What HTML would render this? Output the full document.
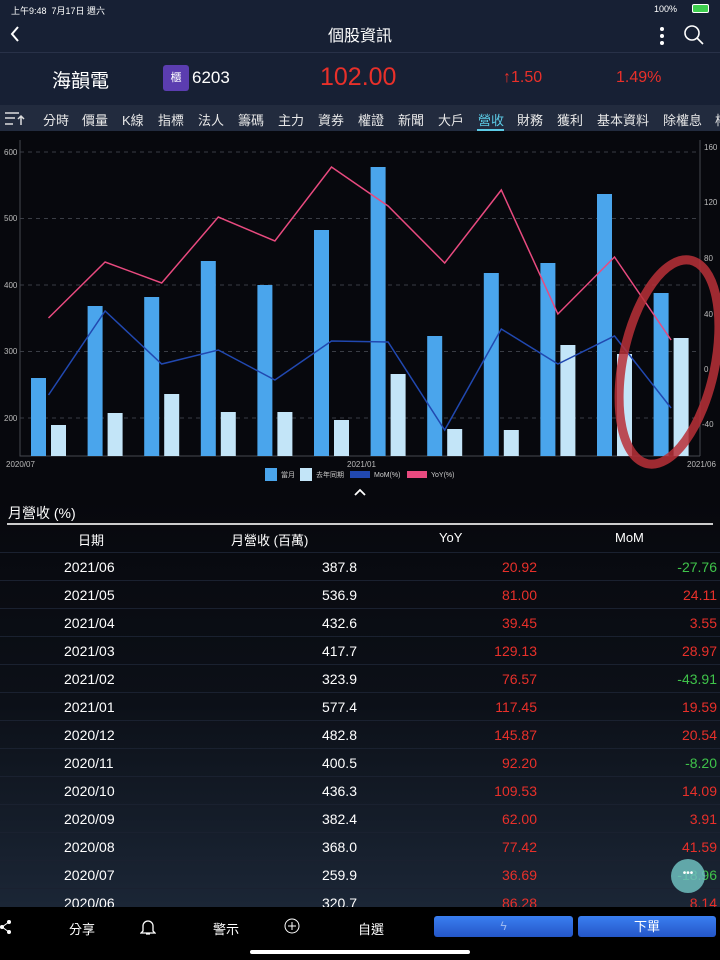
<!DOCTYPE html>
<html><head><meta charset="utf-8"><style>
*{margin:0;padding:0;box-sizing:border-box}
body{width:720px;height:960px;overflow:hidden;background:#07080d;font-family:"Liberation Sans","Noto Sans CJK TC",sans-serif;color:#fff;position:relative}
.abs{position:absolute}
#top{left:0;top:0;width:720px;height:105px;background:#172034}
#tabs{left:0;top:105px;width:720px;height:26px;background:#222b3e;font-size:13px;color:#e8e8e8}
#tabs span{position:absolute;top:5px;white-space:nowrap}
#tbl{left:0;top:500px;width:720px;height:407px;background:linear-gradient(#07080d 0%,#0c1018 50%,#1b2636 100%)}
.row{position:absolute;left:0;width:720px;height:28px;border-top:1px solid #1a2130;font-size:14px}
.row span{position:absolute;top:6px}
.d{left:64px}.v{right:363px}.y{right:183px;color:#e8302a}.m{right:3px;color:#e8302a}.g{color:#3fc34a!important}
#bot{left:0;top:907px;width:720px;height:53px;background:#000;font-size:13px}
</style></head><body>
<div id="top" class="abs">
 <div class="abs" style="left:11px;top:4px;font-size:9px">上午9:48&nbsp;&nbsp;7月17日 週六</div>
 <div class="abs" style="left:654px;top:4px;font-size:9px">100%</div>
 <div class="abs" style="left:692px;top:4px;width:17px;height:9px;border:1px solid #fff;border-radius:2px;background:#3fcf4f"></div>
 <svg class="abs" style="left:8px;top:24px" width="14" height="20"><path d="M10 3 L4 10 L10 17" stroke="#fff" stroke-width="2" fill="none"/></svg>
 <div class="abs" style="left:0;width:720px;top:22px;text-align:center;font-size:16px">個股資訊</div>
 <div class="abs" style="left:660px;top:27px;width:4px;height:4px;border-radius:2px;background:#fff;box-shadow:0 7px #fff,0 14px #fff"></div>
 <svg class="abs" style="left:683px;top:24px" width="22" height="22"><circle cx="9" cy="9" r="7" stroke="#fff" stroke-width="1.6" fill="none"/><path d="M14 14 L20 20" stroke="#fff" stroke-width="1.6"/></svg>
 <div class="abs" style="left:0;top:52px;width:720px;border-top:1px solid #283148"></div>
 <div class="abs" style="left:52px;top:66px;font-size:19px">海韻電</div>
 <div class="abs" style="left:163px;top:65px;width:26px;height:26px;background:#5b3db0;border-radius:3px;font-size:11px;text-align:center;line-height:26px">櫃</div>
 <div class="abs" style="left:192px;top:68px;font-size:17px">6203</div>
 <div class="abs" style="left:320px;top:63px;font-size:25px;color:#e8302a">102.00</div>
 <div class="abs" style="left:503px;top:69px;font-size:16px;color:#e8302a">↑1.50</div>
 <div class="abs" style="left:616px;top:69px;font-size:16px;color:#e8302a">1.49%</div>
</div>
<div id="tabs" class="abs">
 <svg class="abs" style="left:5px;top:7px" width="20" height="14"><path d="M0 1H14M0 6H10M0 12H8M16 13V4M13 7L16 4L19 7" stroke="#ddd" stroke-width="1.5" fill="none"/></svg>
 <span style="left:43px">分時</span><span style="left:82px">價量</span><span style="left:122px">K線</span><span style="left:158px">指標</span><span style="left:198px">法人</span><span style="left:238px">籌碼</span><span style="left:278px">主力</span><span style="left:318px">資券</span><span style="left:358px">權證</span><span style="left:398px">新聞</span><span style="left:438px">大戶</span><span style="left:478px;color:#5ccbe6">營收</span><span style="left:517px">財務</span><span style="left:557px">獲利</span><span style="left:597px">基本資料</span><span style="left:663px">除權息</span><span style="left:715px">權</span>
 <div class="abs" style="left:477px;top:24px;width:27px;height:2px;background:#5ccbe6"></div>
</div>
<svg class="abs" style="left:0;top:131px" width="720" height="369" viewBox="0 131 720 369">
 <g stroke="#3a3d45" stroke-dasharray="4,4" stroke-width="1">
  <path d="M20 152H700M20 218.5H700M20 285H700M20 351.5H700M20 418H700"/>
 </g>
 <path d="M20 140V456H700M700 140V456" stroke="#444850" fill="none"/>
 <g font-size="8" fill="#bbb">
  <text x="4" y="155">600</text><text x="4" y="221">500</text><text x="4" y="288">400</text><text x="4" y="354">300</text><text x="4" y="421">200</text>
  <text x="704" y="150">160</text><text x="704" y="205">120</text><text x="704" y="261">80</text><text x="704" y="317">40</text><text x="704" y="372">0</text><text x="702" y="427">-40</text>
  <text x="6" y="467">2020/07</text><text x="347" y="467">2021/01</text><text x="687" y="467">2021/06</text>
 </g>
 <g fill="#4aa5ec">
  <rect x="31" y="378" width="15" height="78"/><rect x="87.6" y="306" width="15" height="150"/><rect x="144.2" y="297" width="15" height="159"/><rect x="200.8" y="261" width="15" height="195"/><rect x="257.4" y="285" width="15" height="171"/><rect x="314" y="230" width="15" height="226"/><rect x="370.6" y="167" width="15" height="289"/><rect x="427.2" y="336" width="15" height="120"/><rect x="483.8" y="273" width="15" height="183"/><rect x="540.4" y="263" width="15" height="193"/><rect x="597" y="194" width="15" height="262"/><rect x="653.6" y="293" width="15" height="163"/>
 </g>
 <g fill="#c3e5f8">
  <rect x="51" y="425" width="15" height="31"/><rect x="107.6" y="413" width="15" height="43"/><rect x="164.2" y="394" width="15" height="62"/><rect x="220.8" y="412" width="15" height="44"/><rect x="277.4" y="412" width="15" height="44"/><rect x="334" y="420" width="15" height="36"/><rect x="390.6" y="374" width="15" height="82"/><rect x="447.2" y="429" width="15" height="27"/><rect x="503.8" y="430" width="15" height="26"/><rect x="560.4" y="345" width="15" height="111"/><rect x="617" y="354" width="15" height="102"/><rect x="673.6" y="338" width="15" height="118"/>
 </g>
 <polyline fill="none" stroke="#e84a7f" stroke-width="1.5" points="48.5,318 105.1,262 161.7,283 218.3,217 274.9,241 331.5,167 388.1,206 444.7,263 501.3,190 557.9,314 614.5,257 671.1,340"/>
 <polyline fill="none" stroke="#2148b0" stroke-width="1.5" points="48.5,395 105.1,311 161.7,364 218.3,350 274.9,380 331.5,341 388.1,342 444.7,430 501.3,329 557.9,364 614.5,336 671.1,408"/>
 <ellipse cx="669" cy="362" rx="46" ry="104" transform="rotate(12 669 362)" fill="none" stroke="#b83038" stroke-width="9" opacity="0.85"/>
 <g font-size="7" fill="#ccc">
  <rect x="265" y="468" width="12" height="13" fill="#4aa5ec"/><text x="281" y="477">當月</text>
  <rect x="300" y="468" width="12" height="13" fill="#c3e5f8"/><text x="316" y="477">去年同期</text>
  <rect x="350" y="471" width="20" height="7" fill="#2148b0"/><text x="374" y="477">MoM(%)</text>
  <rect x="407" y="471" width="20" height="7" fill="#e84a7f"/><text x="431" y="477">YoY(%)</text>
 </g>
 <path d="M355 495L360 490L365 495" stroke="#fff" stroke-width="1.8" fill="none"/>
</svg>
<div id="tbl" class="abs">
 <div class="abs" style="left:8px;top:3px;font-size:14px">月營收 (%)</div>
 <div class="abs" style="left:7px;top:23px;width:706px;height:2px;background:#ccc"></div>
 <div class="abs" style="top:30px;left:0;width:720px;font-size:13px">
  <span class="abs" style="left:78px">日期</span><span class="abs" style="left:231px">月營收 (百萬)</span><span class="abs" style="left:439px">YoY</span><span class="abs" style="left:615px">MoM</span>
 </div>
 <div class="row" style="top:52px"><span class="d">2021/06</span><span class="v">387.8</span><span class="y">20.92</span><span class="m g">-27.76</span></div>
 <div class="row" style="top:80px"><span class="d">2021/05</span><span class="v">536.9</span><span class="y">81.00</span><span class="m">24.11</span></div>
 <div class="row" style="top:108px"><span class="d">2021/04</span><span class="v">432.6</span><span class="y">39.45</span><span class="m">3.55</span></div>
 <div class="row" style="top:136px"><span class="d">2021/03</span><span class="v">417.7</span><span class="y">129.13</span><span class="m">28.97</span></div>
 <div class="row" style="top:164px"><span class="d">2021/02</span><span class="v">323.9</span><span class="y">76.57</span><span class="m g">-43.91</span></div>
 <div class="row" style="top:192px"><span class="d">2021/01</span><span class="v">577.4</span><span class="y">117.45</span><span class="m">19.59</span></div>
 <div class="row" style="top:220px"><span class="d">2020/12</span><span class="v">482.8</span><span class="y">145.87</span><span class="m">20.54</span></div>
 <div class="row" style="top:248px"><span class="d">2020/11</span><span class="v">400.5</span><span class="y">92.20</span><span class="m g">-8.20</span></div>
 <div class="row" style="top:276px"><span class="d">2020/10</span><span class="v">436.3</span><span class="y">109.53</span><span class="m">14.09</span></div>
 <div class="row" style="top:304px"><span class="d">2020/09</span><span class="v">382.4</span><span class="y">62.00</span><span class="m">3.91</span></div>
 <div class="row" style="top:332px"><span class="d">2020/08</span><span class="v">368.0</span><span class="y">77.42</span><span class="m">41.59</span></div>
 <div class="row" style="top:360px"><span class="d">2020/07</span><span class="v">259.9</span><span class="y">36.69</span><span class="m g">-18.96</span></div>
 <div class="row" style="top:388px"><span class="d">2020/06</span><span class="v">320.7</span><span class="y">86.28</span><span class="m">8.14</span></div>
 <div class="abs" style="left:671px;top:359px;width:34px;height:34px;border-radius:50%;background:rgba(110,190,190,0.85);font-size:10px;text-align:center;line-height:30px">•••</div>
</div>
<div id="bot" class="abs">
 <svg class="abs" style="left:0;top:12px" width="12" height="16"><circle cx="9" cy="3" r="2" fill="#fff"/><circle cx="9" cy="13" r="2" fill="#fff"/><circle cx="2" cy="8" r="2" fill="#fff"/><path d="M9 3L2 8L9 13" stroke="#fff" fill="none"/></svg>
 <span class="abs" style="left:69px;top:12px">分享</span>
 <svg class="abs" style="left:140px;top:11px" width="16" height="18"><path d="M3 13V8A5 5 0 0 1 13 8V13L15 15H1Z M6 16H10" stroke="#fff" stroke-width="1.3" fill="none"/></svg>
 <span class="abs" style="left:213px;top:12px">警示</span>
 <svg class="abs" style="left:284px;top:11px" width="16" height="16"><circle cx="8" cy="8" r="7" stroke="#fff" fill="none"/><path d="M8 4V12M4 8H12" stroke="#fff"/></svg>
 <span class="abs" style="left:358px;top:12px">自選</span>
 <div class="abs" style="left:434px;top:9px;width:139px;height:21px;border-radius:3px;background:linear-gradient(#3a7ef0,#2456c8);text-align:center;color:#9bb8f0;line-height:21px;font-size:12px">ϟ</div>
 <div class="abs" style="left:578px;top:9px;width:138px;height:21px;border-radius:3px;background:linear-gradient(#3a7ef0,#2456c8);text-align:center;line-height:21px">下單</div>
 <div class="abs" style="left:250px;top:43px;width:220px;height:4px;border-radius:2px;background:#fff"></div>
</div>
</body></html>
